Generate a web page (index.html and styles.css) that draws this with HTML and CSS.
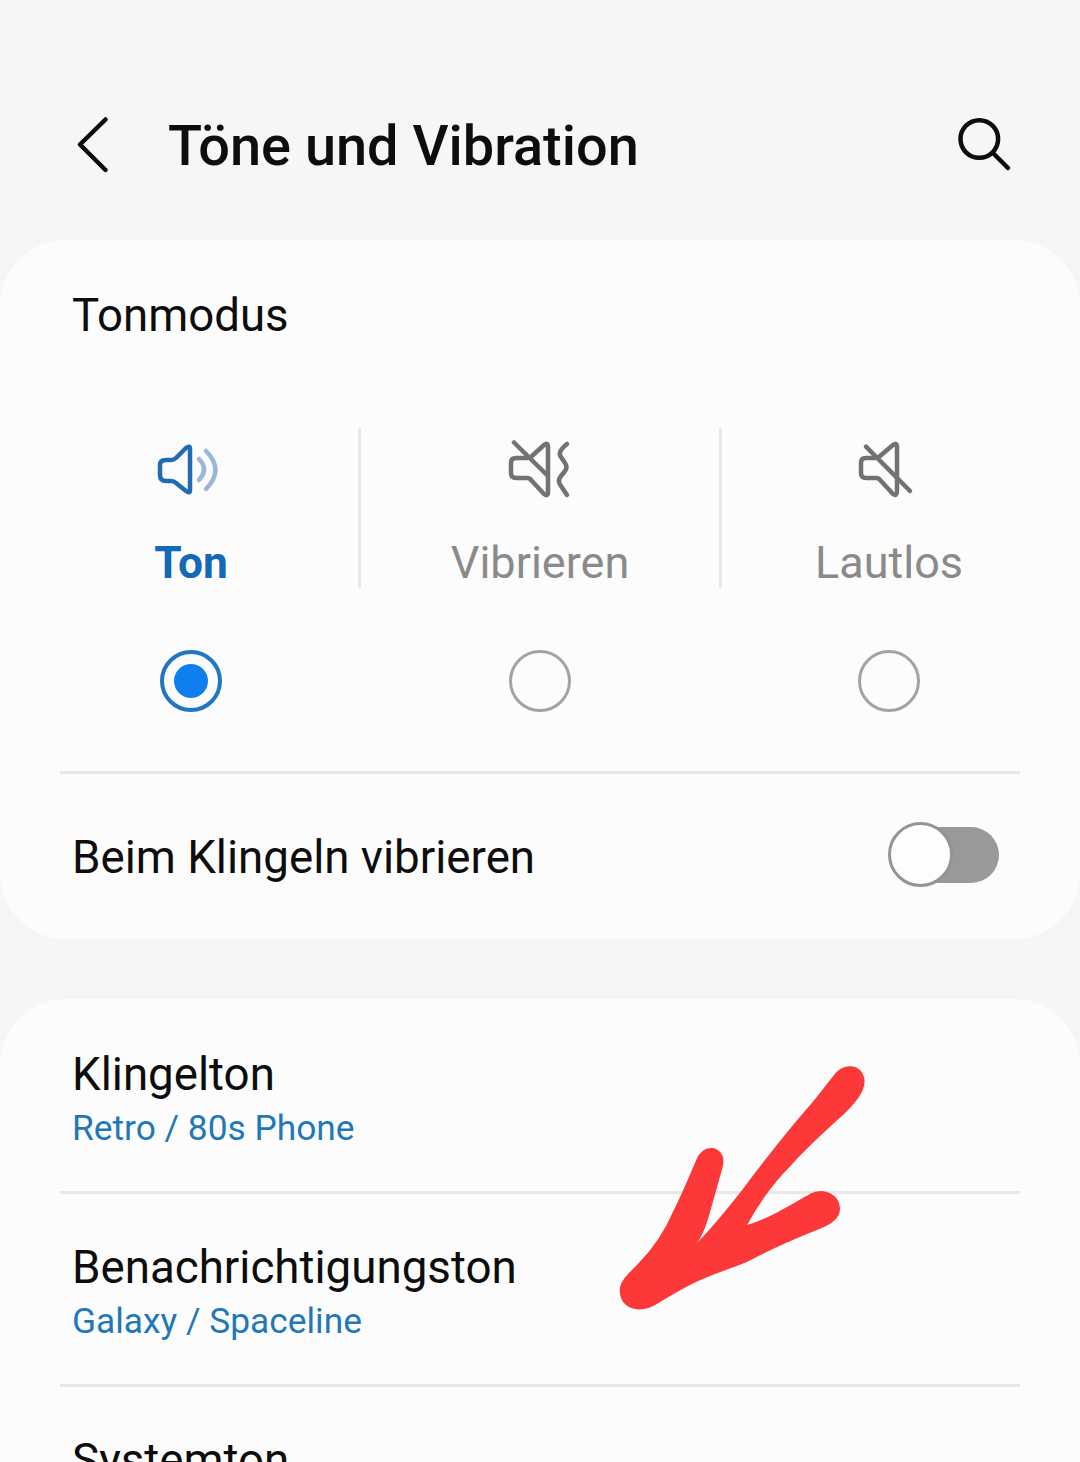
FILE: index.html
```html
<!DOCTYPE html>
<html lang="de">
<head>
<meta charset="utf-8">
<title>Töne und Vibration</title>
<link rel="stylesheet" href="styles.css">
</head>
<body>
<div class="screen">
  <header class="appbar">
    <svg class="back" viewBox="0 0 40 60" width="40" height="60"><path d="M33.5 5.5 L8 30.5 L33.5 56"/></svg>
    <h1 class="title">Töne und Vibration</h1>
    <svg class="search" viewBox="0 0 60 60" width="60" height="60"><circle cx="27.3" cy="25" r="18.8"/><path d="M41 39 L56 54"/></svg>
  </header>

  <section class="card card-mode">
    <div class="mode-heading">Tonmodus</div>
    <div class="modes">
      <div class="mode mode-active">
        <svg class="mode-icon" viewBox="0 0 70 60" width="70" height="60">
          <path class="ic-blue" d="M4 25 Q4 20 10 20 L15 20 Q18 20 20 18 L30 8 Q34 5 34 9 L34 50 Q34 54 30 51 L20 43 Q18 41 15 41 L10 41 Q4 41 4 35 Z"/>
          <path class="ic-light" d="M43 19 Q53 29 43 40"/>
          <path class="ic-light" d="M50 11 Q69 30 50 49"/>
        </svg>
        <div class="mode-label">Ton</div>
      </div>
      <div class="mode mode-mid">
        <svg class="mode-icon" viewBox="0 0 70 60" width="70" height="60">
          <path class="ic-grey" d="M11 18 L22 18 Q25 18 27 16 L39 5 Q43 2 43 7 L43 52 Q43 57 39 54 L27 41 Q25 38 22 38 L11 38 Q6 38 6 33 L6 23 Q6 18 11 18 Z"/>
          <path class="ic-grey" d="M9 2.5 L42 35"/>
          <path class="ic-grey" d="M62 4 Q52 12 56 17 L60 23 Q63 27 60 31 L56 36 Q52 41 56 46 L62 55"/>
        </svg>
        <div class="mode-label">Vibrieren</div>
      </div>
      <div class="mode">
        <svg class="mode-icon" viewBox="0 0 70 60" width="70" height="60">
          <path class="ic-grey" d="M12 18 L21 18 Q24 18 26 16 L39 5 Q43 2 43 7 L43 51 Q43 57 39 54 L27 41 Q25 38 22 38 L12 38 Q7 38 7 33 L7 23 Q7 18 12 18 Z"/>
          <path class="ic-grey" d="M12 6.7 L56 51"/>
        </svg>
        <div class="mode-label">Lautlos</div>
      </div>
    </div>
    <div class="radios">
      <div class="radio-cell"><span class="radio radio-on"></span></div>
      <div class="radio-cell"><span class="radio"></span></div>
      <div class="radio-cell"><span class="radio"></span></div>
    </div>
    <div class="row-toggle">
      <span class="row-title">Beim Klingeln vibrieren</span>
      <span class="toggle"><span class="knob"></span></span>
    </div>
  </section>

  <section class="card card-list">
    <div class="item">
      <div class="row-title">Klingelton</div>
      <div class="row-sub">Retro / 80s Phone</div>
    </div>
    <div class="item">
      <div class="row-title">Benachrichtigungston</div>
      <div class="row-sub">Galaxy / Spaceline</div>
    </div>
    <div class="item">
      <div class="row-title">Systemton</div>
    </div>
  </section>

  <svg class="arrow" viewBox="0 0 810 810" width="270" height="270"><path d="M32 722 C32 695 55 675 85 645 C125 605 165 550 195 480 C220 430 245 370 262 330 C275 298 310 285 330 310 C342 325 338 345 331 365 C318 410 305 460 290 510 C278 550 258 585 232 610 C285 565 345 490 400 420 C460 340 530 250 600 170 C630 135 655 100 680 70 C705 42 750 45 760 85 C766 120 735 155 700 190 C650 235 590 290 540 345 C490 395 440 465 405 530 C475 510 540 470 600 435 C640 413 685 435 687 475 C688 505 660 522 625 535 C550 565 480 595 420 628 C375 650 315 665 260 692 C220 710 175 738 135 762 C95 785 35 780 32 722 Z"/></svg>
</div>
</body>
</html>
```
FILE: styles.css
```css
* { box-sizing: border-box; }
html, body { margin: 0; padding: 0; }
body { background: #f6f6f6; font-family: Roboto, "Liberation Sans", sans-serif; color: #0d0d0d; }
.screen { position: relative; width: 1080px; height: 1462px; overflow: hidden; background: #f6f6f6; }

.appbar { height: 240px; display: flex; align-items: center; padding: 0 68px 0 72px; }
.back { flex: none; margin-top: 48px; margin-right: 56px; }
.back path { fill: none; stroke: #0d0d0d; stroke-width: 4.5; stroke-linecap: round; stroke-linejoin: round; }
.title { flex: 1; margin: 52px 0 0; font-size: 55.9px; line-height: 66px; font-weight: 500; color: #0d0d0d; white-space: nowrap; }
.search { flex: none; margin-top: 48px; }
.search circle, .search path { fill: none; stroke: #0d0d0d; stroke-width: 4.5; stroke-linecap: round; }

.card { background: #fcfcfc; border-radius: 66px; }
.card-mode { height: 699px; padding-top: 49px; }
.card-list { margin-top: 60px; padding-top: 2px; }

.mode-heading { padding-left: 72px; font-size: 45.6px; line-height: 54px; color: #0d0d0d; }
.modes { display: grid; grid-template-columns: 336px 364px 336px; margin: 85px 22px 0; height: 160px; }
.mode { display: flex; flex-direction: column; align-items: center; padding-top: 12px; }
.mode:first-child { padding-left: 2px; }
.mode:last-child { padding-right: 2px; }
.mode-mid { border-left: 3px solid #e8e8e8; border-right: 3px solid #e8e8e8; }
.mode-icon { display: block; }
.mode-label { margin-top: 38px; font-size: 45px; line-height: 50px; color: #8a8a8a; }
.mode-active .mode-label { color: #1368b8; font-weight: 700; font-size: 44.3px; }
.ic-blue, .ic-light, .ic-grey { fill: none; stroke-width: 4.5; stroke-linecap: round; stroke-linejoin: round; }
.ic-blue { stroke: #1f6cb5; }
.ic-light { stroke: #9ab6d8; }
.ic-grey { stroke: #727272; }

.radios { display: grid; grid-template-columns: 338px 360px 338px; margin: 62px 22px 0; }
.radio-cell { display: flex; justify-content: center; }
.radio { width: 62px; height: 62px; border-radius: 50%; border: 3px solid #a3a3a3; display: flex; align-items: center; justify-content: center; }
.radio-on { border: 4px solid #2176c4; }
.radio-on::after { content: ""; width: 34px; height: 34px; border-radius: 50%; background: #0f7ff0; }

.row-toggle { margin: 59px 60px 0; border-top: 3px solid #e8e8e8; height: 168px; display: flex; align-items: center; justify-content: space-between; padding: 0 21px 0 12px; }
.row-title { font-size: 45.7px; line-height: 54px; color: #0d0d0d; white-space: nowrap; position: relative; top: 1px; }
.toggle { position: relative; width: 108px; height: 56px; border-radius: 28px; background: #999; display: block; margin-top: -4px; }
.knob { position: absolute; left: -3px; top: -5px; width: 65px; height: 65px; border-radius: 50%; background: #fdfdfd; border: 3px solid #949494; }

.item { margin: 0 60px; padding: 46px 12px 0; height: 193px; border-bottom: 3px solid #e8e8e8; }
.item:last-child { border-bottom: 0; }
.row-sub { margin-top: 6px; font-size: 35.3px; line-height: 42px; color: #1f78b8; }

.arrow { position: absolute; left: 610px; top: 1050px; }
.arrow path { fill: #fc3838; stroke: #fc3838; stroke-width: 6; stroke-linejoin: round; }
```
